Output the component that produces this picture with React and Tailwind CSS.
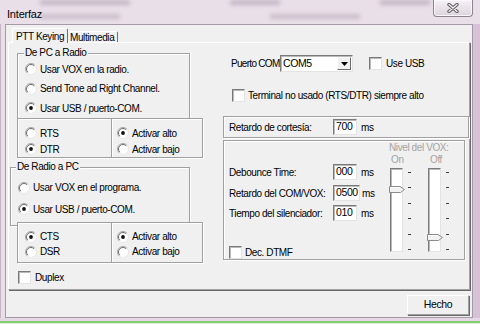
import React from "react"

const etched = "border border-[#a0a0a0] shadow-[inset_1px_1px_0_#fff,1px_1px_0_#fff]"
const sunken = "border border-t-[#7a7a7a] border-l-[#7a7a7a] border-r-[#e3e3e3] border-b-[#e3e3e3] bg-white shadow-[inset_1px_1px_0_#b9b9b9]"

function Radio({ checked }) {
  return (
    <svg width="12" height="12" viewBox="0 0 12 12" className="shrink-0">
      <circle cx="6" cy="6" r="5.5" fill="#fff" />
      <path d="M2.1 9.9 A5.5 5.5 0 0 1 9.9 2.1" stroke="#a6a6a6" fill="none" />
      <path d="M2.8 9.2 A4.5 4.5 0 0 1 9.2 2.8" stroke="#6d6d6d" fill="none" />
      <path d="M9.9 2.1 A5.5 5.5 0 0 1 2.1 9.9" stroke="#e6e6e6" fill="none" />
      {checked && <circle cx="6" cy="6" r="1.9" fill="#111" />}
    </svg>
  )
}

function RadioRow({ checked, label, h }) {
  return (
    <div className={`flex items-center gap-[3px] ${h}`}>
      <Radio checked={checked} />
      <span className="whitespace-nowrap">{label}</span>
    </div>
  )
}

function Check() {
  return <div className={`w-[13px] h-[13px] shrink-0 ${sunken}`} />
}

function Field({ value, w = "w-[24px]" }) {
  return (
    <div className={`${w} h-[16px] ${sunken} flex items-center pl-[2px] text-[10.5px]`}>{value}</div>
  )
}

function Slider({ thumb }) {
  return (
    <div className="flex">
      <div className={`relative w-[13px] h-[84px] ${sunken}`}>
        <svg width="16" height="7" viewBox="0 0 16 7" className="absolute -left-[2px]" style={{ top: thumb }}>
          <polygon points="0.5,0.5 11,0.5 15.5,3.5 11.5,6.5 0.5,6.5" fill="#f2f2f2" stroke="#8a8a8a" />
          <line x1="1" y1="1.5" x2="10.5" y2="1.5" stroke="#fff" />
        </svg>
      </div>
      <div className="ml-[5px] mt-[4px] h-[78px] flex flex-col justify-between">
        {[0, 1, 2, 3, 4, 5].map((i) => (
          <div key={i} className="w-[3px] h-[1px] bg-[#3c3c3c]" />
        ))}
      </div>
    </div>
  )
}

export default function App() {
  return (
    <div className="w-[480px] h-[324px] overflow-hidden flex flex-col bg-[#e9dfe9] text-black text-[10px] tracking-[-0.4px] font-['Liberation_Sans',Arial,sans-serif]">
      {/* title bar */}
      <div className="relative h-[24px] shrink-0 flex items-start">
        <div className="absolute left-[40px] top-[0px] flex gap-[100px] blur-[2.2px] opacity-50">
          <div className="w-[90px] h-[5px] bg-[#9a8e9a]" />
          <div className="w-[50px] h-[5px] bg-[#9a8e9a]" />
          <div className="w-[50px] h-[5px] bg-[#9a8e9a]" />
        </div>
        <div className="absolute left-[40px] top-[14px] flex gap-[150px] blur-[2.2px] opacity-40">
          <div className="w-[80px] h-[5px] bg-[#9a8e9a]" />
          <div className="w-[90px] h-[5px] bg-[#9a8e9a]" />
        </div>
        <span className="relative mt-[6px] ml-[7px] text-[11px] tracking-[-0.2px]">Interfaz</span>
        <div className="relative ml-auto mr-[7px] w-[40px] h-[17px] border border-t-0 border-[#8d838f] rounded-b-[4px] bg-gradient-to-b from-[#f6f2f6] to-[#dcd4dd] flex items-center justify-center shadow-[inset_0_0_0_1px_#faf7fa]">
          <svg width="12" height="10" viewBox="0 0 12 10">
            <path d="M2 1.5 L10 8.5 M10 1.5 L2 8.5" stroke="#5e5e5e" strokeWidth="3.4" strokeLinecap="round" />
            <path d="M2 1.5 L10 8.5 M10 1.5 L2 8.5" stroke="#f4f4f4" strokeWidth="1.3" strokeLinecap="round" />
          </svg>
        </div>
      </div>

      <div className="flex h-[294px] shrink-0">
        <div className="w-[5px] border-l border-[#c4b4c4]" />
        {/* client */}
        <div className="w-[468px] h-[294px] bg-[#f0f0f0] border border-[#a49aa6] flex flex-col px-[2px] pt-[3px]">
          {/* tabs */}
          <div className="h-[14px] flex items-end pl-[4px]">
            <div className="relative z-10 -mb-[1px] w-[56px] h-[15px] bg-[#f0f0f0] border-t border-l border-white border-r border-r-[#6f6f6f] rounded-t-[2px] flex items-center pl-[3px] whitespace-nowrap">
              PTT Keying
            </div>
            <div className="w-[50px] h-[11px] border-t border-white border-r border-r-[#6f6f6f] rounded-t-[2px] flex items-center pl-[2px] whitespace-nowrap">
              Multimedia
            </div>
          </div>
          {/* tab page */}
          <div className="w-[462px] h-[248px] border border-t-white border-l-white border-r-[#a0a0a0] border-b-[#a0a0a0] shadow-[1px_1px_0_#6a6a6a] flex">
            {/* left column */}
            <div className="w-[194px] flex flex-col">
              <div className="relative ml-[8px] mt-[10px] w-[173px] h-[65px] border border-b-0 border-[#a0a0a0] shadow-[inset_1px_1px_0_#fff,1px_0_0_#fff] pl-[7px] pt-[5px]">
                <span className="absolute -top-[7px] left-[6px] px-[1px] bg-[#f0f0f0] leading-[12px]">De PC a Radio</span>
                <RadioRow label="Usar VOX en la radio." h="h-[20px]" />
                <RadioRow label="Send Tone ad Right Channel." h="h-[19px]" />
                <RadioRow checked label="Usar USB / puerto-COM." h="h-[20px]" />
              </div>
              <div className={`relative ml-[8px] w-[186px] h-[40px] flex bg-[#f0f0f0] ${etched}`}>
                <div className="w-[94px] border-r border-[#a0a0a0] shadow-[1px_0_0_#fff] pl-[7px] pt-[6px]">
                  <RadioRow label="RTS" h="h-[16px]" />
                  <RadioRow checked label="DTR" h="h-[16px]" />
                </div>
                <div className="flex-1 pl-[5px] pt-[6px]">
                  <RadioRow checked label="Activar alto" h="h-[16px]" />
                  <RadioRow label="Activar bajo" h="h-[16px]" />
                </div>
              </div>
              <div className={`relative mt-[9px] ml-[1px] w-[180px] h-[59px] ${etched} pl-[7px] pt-[8px]`}>
                <span className="absolute -top-[7px] left-[5px] px-[1px] bg-[#f0f0f0] leading-[12px]">De Radio a PC</span>
                <RadioRow label="Usar VOX en el programa." h="h-[23px]" />
                <RadioRow checked label="Usar USB / puerto-COM." h="h-[20px]" />
              </div>
              <div className={`relative z-10 -mt-[4px] ml-[8px] w-[186px] h-[41px] flex bg-[#f0f0f0] ${etched}`}>
                <div className="w-[94px] border-r border-[#a0a0a0] shadow-[1px_0_0_#fff] pl-[7px] pt-[6px]">
                  <RadioRow checked label="CTS" h="h-[15px]" />
                  <RadioRow label="DSR" h="h-[15px]" />
                </div>
                <div className="flex-1 pl-[5px] pt-[6px]">
                  <RadioRow checked label="Activar alto" h="h-[15px]" />
                  <RadioRow label="Activar bajo" h="h-[15px]" />
                </div>
              </div>
              <div className="mt-[8px] ml-[9px] flex items-center gap-[4px] h-[13px]">
                <Check />
                <span>Duplex</span>
              </div>
            </div>

            {/* right column */}
            <div className="ml-[20px] w-[246px] flex flex-col">
              <div className="mt-[12px] h-[17px] flex items-center">
                <span className="pl-[8px] w-[57px] whitespace-nowrap tracking-[-0.7px]">Puerto COM</span>
                <div className={`w-[73px] h-[17px] ${sunken} flex items-center`}>
                  <span className="pl-[2px] flex-1 text-[10.5px]">COM5</span>
                  <div className="w-[14px] h-[13px] mr-[1px] bg-[#f0f0f0] border border-t-white border-l-white border-r-[#6a6a6a] border-b-[#6a6a6a] flex items-center justify-center">
                    <svg width="7" height="4" viewBox="0 0 7 4"><polygon points="0,0 7,0 3.5,4" fill="#000" /></svg>
                  </div>
                </div>
                <div className="ml-[16px]"><Check /></div>
                <span className="ml-[4px]">Use USB</span>
              </div>
              <div className="mt-[17px] h-[13px] pl-[9px] flex items-center gap-[3px]">
                <Check />
                <span className="whitespace-nowrap">Terminal no usado (RTS/DTR) siempre alto</span>
              </div>
              <div className={`mt-[14px] w-[246px] h-[22px] ${etched} flex items-center pl-[5px]`}>
                <span className="w-[104px]">Retardo de cortesía:</span>
                <Field value="700" />
                <span className="ml-[4px]">ms</span>
              </div>
              <div className={`mt-[2px] w-[242px] h-[120px] ${etched} flex`}>
                <div className="w-[160px] pl-[5px] pt-[23px] flex flex-col">
                  <div className="h-[16px] flex items-center">
                    <span className="w-[104px]">Debounce Time:</span>
                    <Field value="000" />
                    <span className="ml-[4px]">ms</span>
                  </div>
                  <div className="mt-[5px] h-[16px] flex items-center">
                    <span className="w-[104px]">Retardo del COM/VOX:</span>
                    <Field value="0500" w="w-[27px]" />
                    <span className="ml-[2px]">ms</span>
                  </div>
                  <div className="mt-[4px] h-[16px] flex items-center">
                    <span className="w-[104px]">Tiempo del silenciador:</span>
                    <Field value="010" />
                    <span className="ml-[4px]">ms</span>
                  </div>
                  <div className="mt-[25px] h-[13px] flex items-center gap-[3px]">
                    <Check />
                    <span>Dec. DTMF</span>
                  </div>
                </div>
                <div className="ml-[5px] pt-[1px] flex flex-col text-[#a3a3a3]">
                  <span className="h-[11px] leading-[11px] whitespace-nowrap">Nivel del VOX:</span>
                  <div className="h-[12px] flex items-center">
                    <span className="pl-[2px] w-[41px]">On</span>
                    <span>Off</span>
                  </div>
                  <div className="mt-[3px] pl-[1px] flex">
                    <Slider thumb={17} />
                    <div className="ml-[17px]">
                      <Slider thumb={65} />
                    </div>
                  </div>
                </div>
              </div>
            </div>
          </div>
          {/* bottom */}
          <div className="flex justify-end">
            <div className="mt-[5px] mr-[1px] w-[62px] h-[20px] bg-[#f0f0f0] border border-t-white border-l-white border-r-[#a0a0a0] border-b-[#a0a0a0] shadow-[1px_1px_0_#6a6a6a] flex items-center justify-center text-[10.5px]">
              Hecho
            </div>
          </div>
        </div>
        <div className="w-[7px] bg-[#d6c1d7]" />
      </div>
      <div className="h-[3px] bg-[#e4d8e4]" />
      <div className="h-[2px] bg-[#86cc78]" />
      <div className="h-[1px] bg-[#d9f0d3]" />
    </div>
  )
}
